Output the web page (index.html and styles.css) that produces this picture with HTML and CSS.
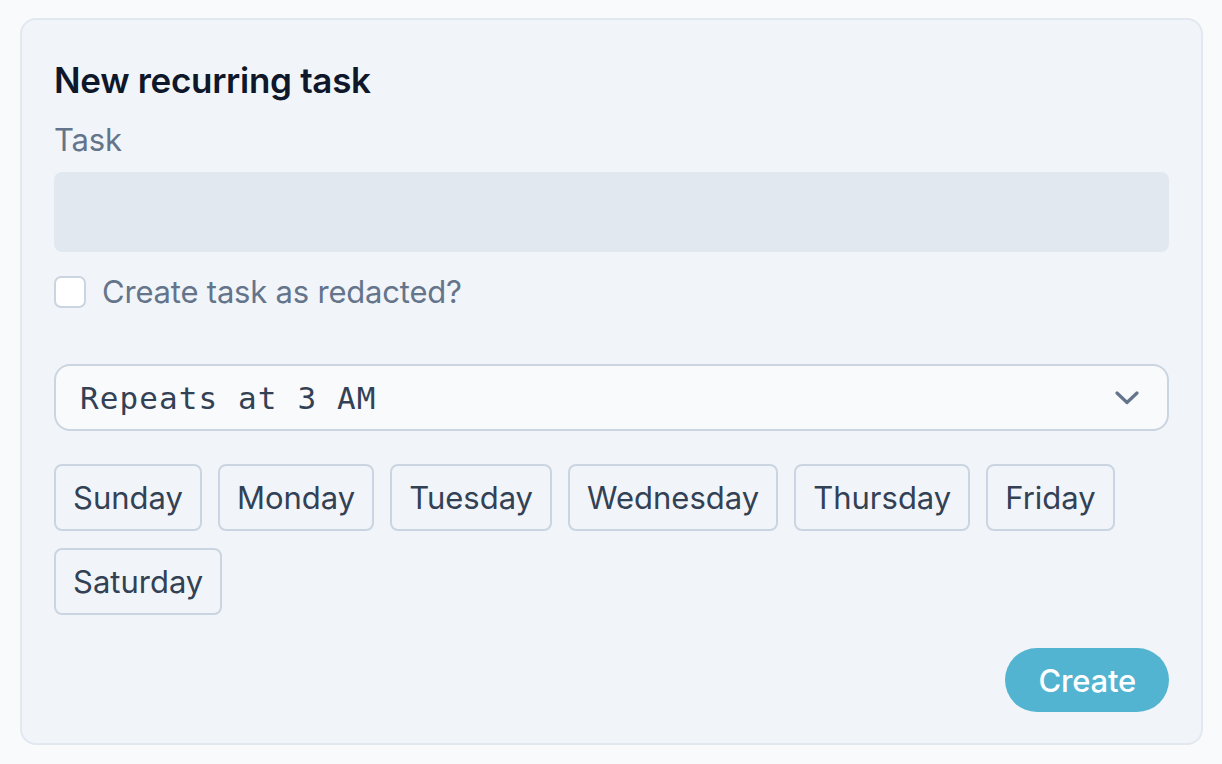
FILE: index.html
```html
<!DOCTYPE html>
<html lang="en">
<head>
<meta charset="utf-8">
<title>New recurring task</title>
<link rel="stylesheet" href="styles.css">
</head>
<body>
<form class="card">
  <h2 class="title">New recurring task</h2>
  <label class="label" for="task">Task</label>
  <input class="input" id="task" type="text">
  <label class="check-row">
    <input class="checkbox" type="checkbox">
    <span class="check-text">Create task as redacted?</span>
  </label>
  <div class="select">
    <span class="select-text">Repeats at 3 AM</span>
    <svg class="chevron" width="24" height="14" viewBox="0 0 24 14" aria-hidden="true">
      <path d="M2 2 L12 11.5 L22 2" fill="none" stroke="#64748b" stroke-width="3.2" stroke-linecap="round" stroke-linejoin="round"/>
    </svg>
  </div>
  <div class="days">
    <button type="button" class="day">Sunday</button>
    <button type="button" class="day">Monday</button>
    <button type="button" class="day">Tuesday</button>
    <button type="button" class="day">Wednesday</button>
    <button type="button" class="day">Thursday</button>
    <button type="button" class="day">Friday</button>
    <button type="button" class="day">Saturday</button>
  </div>
  <div class="actions">
    <button type="button" class="create">Create</button>
  </div>
</form>
</body>
</html>
```

FILE: styles.css
```css
html, body {
  background: #f8fafc;
}
body {
  margin: 18px 19px 0 20px;
  font-family: Inter, "Noto Sans", "Liberation Sans", sans-serif;
}
.card {
  display: flex;
  flex-direction: column;
  background: #f1f5f9;
  border: 2px solid #e2e8f0;
  border-radius: 16px;
  padding: 32px 32px 31px 32px;
}
.title {
  margin: 0;
  font-size: 35px;
  line-height: 56px;
  font-weight: 600;
  color: #0f172a;
  letter-spacing: -0.3px;
}
.label {
  margin-top: 8px;
  font-size: 31px;
  line-height: 48px;
  color: #64748b;
  letter-spacing: -0.2px;
}
.input {
  margin: 8px 0 0 0;
  height: 80px;
  box-sizing: border-box;
  border: none;
  border-radius: 8px;
  background: #e2e8f0;
  outline: none;
}
.check-row {
  margin-top: 16px;
  display: flex;
  align-items: center;
  gap: 16px;
  height: 48px;
}
.checkbox {
  appearance: none;
  -webkit-appearance: none;
  margin: 0;
  width: 32px;
  height: 32px;
  box-sizing: border-box;
  border: 2px solid #cbd5e1;
  border-radius: 7px;
  background: #ffffff;
}
.check-text {
  font-size: 31px;
  line-height: 48px;
  color: #64748b;
  letter-spacing: -0.2px;
}
.select {
  margin-top: 48px;
  height: 67px;
  box-sizing: border-box;
  border: 2px solid #cbd5e1;
  border-radius: 16px;
  background: #f8fafc;
  display: flex;
  align-items: center;
  justify-content: space-between;
  padding: 0 28px 0 24px;
}
.select-text {
  font-family: "DejaVu Sans Mono", "Liberation Mono", monospace;
  font-size: 31px;
  color: #334155;
  letter-spacing: 1.1px;
}
.chevron {
  display: block;
}
.days {
  margin-top: 33px;
  display: flex;
  flex-wrap: wrap;
  column-gap: 16px;
  row-gap: 17px;
}
.day {
  height: 67px;
  box-sizing: border-box;
  padding: 0 17px;
  border: 2px solid #cbd5e1;
  border-radius: 8px;
  background: #f1f5f9;
  font-family: Inter, "Noto Sans", "Liberation Sans", sans-serif;
  font-size: 31px;
  color: #334155;
  letter-spacing: 0;
}
.actions {
  margin-top: 33px;
  display: flex;
  justify-content: flex-end;
}
.create {
  height: 64px;
  box-sizing: border-box;
  padding: 0 33px;
  border: none;
  border-radius: 32px;
  background: #53b4d1;
  color: #ffffff;
  font-family: Inter, "Noto Sans", "Liberation Sans", sans-serif;
  font-size: 31px;
  font-weight: 500;
  letter-spacing: -0.2px;
}
```
